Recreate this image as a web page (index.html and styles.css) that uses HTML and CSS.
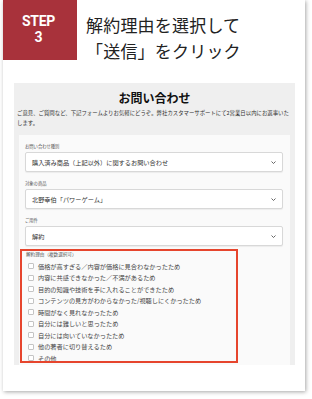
FILE: index.html
```html
<!DOCTYPE html>
<html lang="ja">
<head>
<meta charset="utf-8">
<link rel="stylesheet" href="styles.css">
</head>
<body>
<div class="card">
  <div class="header">
    <div class="step"><span class="step-word">STEP</span><span class="step-num">3</span></div>
    <div class="heading">解約理由を選択して<br>「送信」をクリック</div>
  </div>
  <div class="panel">
    <div class="title">お問い合わせ</div>
    <div class="desc">ご意見、ご質問など、下記フォームよりお気軽にどうぞ。弊社カスタマーサポートにて2営業日以内にお返事いたします。</div>
    <div class="form">
      <div class="label">お問い合わせ種別</div>
      <div class="select"><span>購入済み商品（上記以外）に関するお問い合わせ</span><svg class="chev" width="5" height="3" viewBox="0 0 5 3"><polyline points="0.5,0.5 2.5,2.5 4.5,0.5" fill="none" stroke="#555" stroke-width="0.9"/></svg></div>
      <div class="label gap">対象の商品</div>
      <div class="select"><span>北野幸伯「パワーゲーム」</span><svg class="chev" width="5" height="3" viewBox="0 0 5 3"><polyline points="0.5,0.5 2.5,2.5 4.5,0.5" fill="none" stroke="#555" stroke-width="0.9"/></svg></div>
      <div class="label gap">ご用件</div>
      <div class="select"><span>解約</span><svg class="chev" width="5" height="3" viewBox="0 0 5 3"><polyline points="0.5,0.5 2.5,2.5 4.5,0.5" fill="none" stroke="#555" stroke-width="0.9"/></svg></div>
      <div class="reasons">
        <div class="rlabel">解約理由（複数選択可）</div>
        <div class="item"><span class="box"></span>価格が高すぎる／内容が価格に見合わなかったため</div>
        <div class="item"><span class="box"></span>内容に共感できなかった／不満があるため</div>
        <div class="item"><span class="box"></span>目的の知識や技術を手に入れることができたため</div>
        <div class="item"><span class="box"></span>コンテンツの見方がわからなかった/視聴しにくかったため</div>
        <div class="item"><span class="box"></span>時間がなく見れなかったため</div>
        <div class="item"><span class="box"></span>自分には難しいと思ったため</div>
        <div class="item"><span class="box"></span>自分には向いていなかったため</div>
        <div class="item"><span class="box"></span>他の著者に切り替えるため</div>
        <div class="item"><span class="box"></span>その他</div>
      </div>
    </div>
  </div>
</div>
</body>
</html>
```
FILE: styles.css
```css
html, body {
  margin: 0;
  padding: 0;
  background: #fff;
}
body {
  font-family: "Noto Sans CJK JP", "Noto Sans", sans-serif;
  width: 312px;
  height: 399px;
  overflow: hidden;
}
.card {
  margin-left: 3px;
  width: 302px;
  height: 391px;
  background: #fff;
  box-shadow: 1px 1px 4px rgba(0, 0, 0, 0.35);
  overflow: hidden;
}
.header {
  display: flex;
  height: 60px;
}
.step {
  margin-left: -3px;
  width: 77px;
  height: 60px;
  background: #a8323b;
  color: #fff;
  display: flex;
  flex-direction: column;
  align-items: center;
  font-family: Roboto, "Liberation Sans", sans-serif;
  font-weight: bold;
  font-size: 14px;
  line-height: 16px;
  padding-top: 13px;
  box-sizing: border-box;
}
.step-word {
  letter-spacing: -0.3px;
}
.heading {
  margin-left: 9px;
  padding-top: 12px;
  font-size: 17px;
  line-height: 26px;
  letter-spacing: 0.2px;
  color: #222;
}
.panel {
  margin-top: 23px;
  margin-left: 11px;
  width: 281px;
  height: 282px;
  background: #efefef;
  overflow: hidden;
}
.title {
  padding-top: 7px;
  text-align: center;
  font-weight: bold;
  font-size: 12px;
  line-height: 16px;
  color: #111;
}
.desc {
  margin-top: 2px;
  padding: 0 4px 0 3px;
  font-size: 5.4px;
  line-height: 10px;
  color: #333;
}
.form {
  margin-top: 7px;
  margin-left: 5px;
  width: 271px;
  height: 240px;
  background: #fafafa;
  padding: 7px 7px 0 6px;
  box-sizing: border-box;
}
.label {
  font-size: 4.3px;
  line-height: 8px;
  color: #555;
}
.label.gap {
  margin-top: 7px;
}
.select {
  margin-top: 2px;
  height: 20px;
  box-sizing: border-box;
  border: 1px solid #d8d8d8;
  border-radius: 2px;
  background: #fff;
  box-shadow: 0 1px 1px rgba(0, 0, 0, 0.06);
  display: flex;
  align-items: center;
  justify-content: space-between;
  padding: 0 6px 0 6px;
  font-size: 6.2px;
  color: #333;
}
.chev {
  display: block;
}
.reasons {
  margin-top: 3px;
  margin-left: -5px;
  width: 218px;
  height: 114px;
  box-sizing: border-box;
  border: 2px solid #e6452d;
  padding-left: 6px;
  overflow: hidden;
}
.rlabel {
  margin-left: -2px;
  font-size: 4.6px;
  line-height: 7px;
  color: #555;
  margin-bottom: 2.5px;
}
.item {
  display: flex;
  align-items: center;
  gap: 4px;
  height: 11.5px;
  font-size: 6.2px;
  color: #444;
}
.box {
  width: 6px;
  height: 6px;
  box-sizing: border-box;
  border: 1px solid #c4c4c4;
  border-radius: 1px;
  background: #fff;
  flex: none;
}
```
